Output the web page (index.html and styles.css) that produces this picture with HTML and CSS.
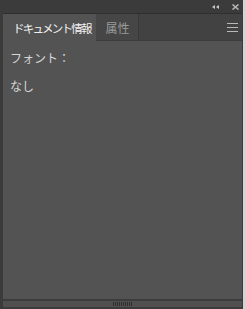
FILE: index.html
```html
<!DOCTYPE html>
<html lang="ja">
<head>
<meta charset="UTF-8">
<meta name="viewport" content="width=device-width, initial-scale=1.0">
<title>ドキュメント情報</title>
<link rel="stylesheet" href="styles.css">
</head>
<body>

<div class="panel">

<!-- Title bar with collapse / close -->
<div class="titlebar">
<span class="collapse-btn">
<svg width="7" height="4" viewBox="0 0 7 4"><path d="M3 0 L0 2 L3 4 Z M7 0 L4 2 L7 4 Z" fill="#c8c8c8"/></svg>
</span>
<span class="close-btn">
<svg width="7" height="6" viewBox="0 0 7 6"><path d="M0.5 0.5 L6.5 5.5 M6.5 0.5 L0.5 5.5" stroke="#b4b4b4" stroke-width="1.6"/></svg>
</span>
</div>

<!-- Tabs -->
<div class="tabs">
<div class="tab active">ドキュメント情報</div>
<div class="tab">属性</div>
<div class="tab-spacer"></div>
<div class="menu-btn">
<span></span><span></span><span></span>
</div>
</div>

<div class="content">
<p>フォント：</p>
<p>なし</p>
</div>

<div class="footer">
<div class="grip"></div>
</div>

</div>

</body>
</html>
```

FILE: styles.css
```css
* {
margin: 0;
padding: 0;
box-sizing: border-box;
font-family: "Noto Sans CJK JP", "Noto Sans", sans-serif;
}

body {
background-color: #d4d4d4;
width: 246px;
height: 309px;
overflow: hidden;
}

.panel {
width: 243px;
height: 309px;
display: flex;
flex-direction: column;
background: #535353;
border-left: 3px solid #3b3b3b;
border-right: 1px solid #3b3b3b;
}

/* Title bar */
.titlebar {
height: 14px;
background: #3b3b3b;
border-bottom: 1px solid #2f2f2f;
display: flex;
align-items: center;
justify-content: flex-end;
padding-right: 3px;
gap: 13px;
}

.titlebar span {
display: flex;
}

/* Tabs */
.tabs {
height: 27px;
display: flex;
background: #424242;
border-bottom: 1px solid #3c3c3c;
}

.tab {
padding: 0 8px 0 10px;
display: flex;
align-items: center;
font-size: 12px;
color: #9a9a9a;
background: #464646;
border-right: 1px solid #383838;
}

.tab.active {
background: #535353;
color: #f2f2f2;
font-size: 11.5px;
letter-spacing: -1.8px;
padding-right: 5px;
margin-bottom: -1px;
border-right: none;
}

.tab-spacer {
flex: 1;
}

.menu-btn {
width: 11px;
margin-right: 4px;
display: flex;
flex-direction: column;
justify-content: center;
gap: 3px;
}

.menu-btn span {
height: 1px;
background: #b8b8b8;
}

/* Content */
.content {
flex: 1;
padding: 8px 7px;
font-size: 12px;
color: #d6d6d6;
}

.content p {
line-height: 17px;
margin-bottom: 11px;
}

/* Footer with resize grip */
.footer {
height: 10px;
border-top: 2px solid #3c3c3c;
border-bottom: 2px solid #3c3c3c;
background: #505050;
display: flex;
justify-content: center;
align-items: center;
}

.grip {
width: 19px;
height: 4px;
background: repeating-linear-gradient(to right, #2e2e2e 0 1px, transparent 1px 2px);
}
```
